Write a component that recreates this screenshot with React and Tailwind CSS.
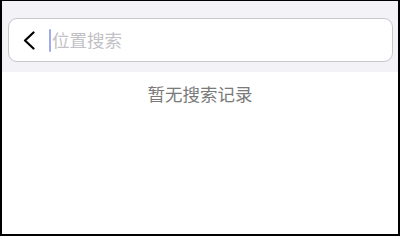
export default function App() {
  return (
    <div
      className="w-[400px] h-[236px] bg-white border-black border-t border-l-2 border-r-2 border-b-2 flex flex-col"
      style={{ fontFamily: '"Noto Sans CJK SC", "Noto Sans", sans-serif' }}
    >
      <div className="bg-[#f2f2f7] pt-[17px] pb-[10px] pl-[6px] pr-[5px]">
        <div className="h-[44px] rounded-[9px] border border-[#c6c6cb] bg-white flex items-center">
          <svg width="14" height="19" viewBox="0 0 14 19" className="ml-[13px]" fill="none">
            <path d="M11.5 1.5 L3 9.5 L11.5 17.5" stroke="#000" strokeWidth="2.2" strokeLinecap="round" strokeLinejoin="round" />
          </svg>
          <div className="ml-[13px] w-[2px] h-[23px] bg-[#a3aaec] rounded-full" />
          <span className="ml-[1px] text-[17.5px] leading-none text-[#c2c2c6]">位置搜索</span>
        </div>
      </div>
      <div className="pt-[10px] text-center text-[17.5px] leading-[24px] text-[#7a7a7a]">暂无搜索记录</div>
    </div>
  );
}
